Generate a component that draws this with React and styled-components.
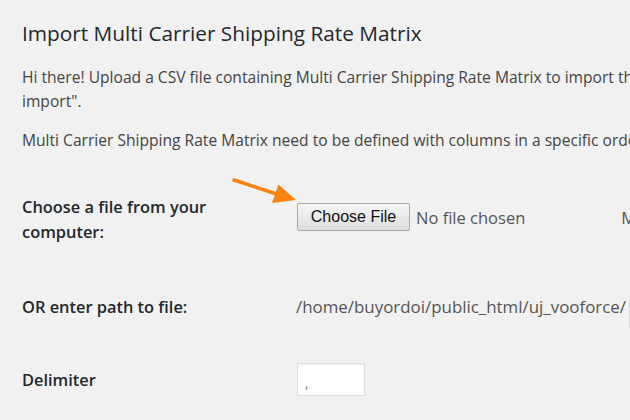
import React from "react";
import styled, { createGlobalStyle } from "styled-components";

const Global = createGlobalStyle`
  html, body { margin: 0; padding: 0; background: #f1f1f1; overflow: hidden; }
  body { font-family: "Open Sans", "Noto Sans", sans-serif; color: #444; }
`;

const Page = styled.div`
  position: relative;
  width: 630px;
  height: 420px;
  overflow: hidden;
  padding-left: 22px;
  box-sizing: border-box;
`;

const Title = styled.h1`
  margin: 19px 0 0;
  font-size: 20.8px;
  line-height: 28px;
  font-weight: 400;
  color: #23282d;
  white-space: nowrap;
`;

const Para = styled.p`
  margin: ${(p) => p.$top}px 0 0;
  font-size: 15.6px;
  line-height: 24px;
  color: #444;
  white-space: nowrap;
`;

const Table = styled.div`
  display: flex;
  flex-direction: column;
  margin-top: 42px;
`;

const Row = styled.div`
  display: grid;
  grid-template-columns: 274px auto;
  align-items: ${(p) => p.$align || "start"};
  height: ${(p) => p.$h}px;
`;

const Label = styled.div`
  font-size: 16.4px;
  line-height: 25px;
  font-weight: 600;
  color: #23282d;
`;

const Field = styled.div`
  display: flex;
  align-items: ${(p) => p.$align || "center"};
  gap: 6px;
  white-space: nowrap;
  padding-top: ${(p) => p.$pt || 0}px;
`;

const FileButton = styled.button`
  font-family: "Liberation Sans", Arial, sans-serif;
  font-size: 16px;
  color: #111;
  height: 28px;
  width: 113px;
  padding: 0 8px;
  border: 1px solid #a9a9a9;
  border-radius: 2px;
  background: linear-gradient(#f6f6f6, #dddddd);
  flex: none;
  margin-left: 1px;
`;

const Muted = styled.span`
  font-size: ${(p) => p.$fs || 16.5}px;
  line-height: 25px;
  color: #555;
  margin-left: ${(p) => p.$ml || 0}px;
`;

const PathInput = styled.input`
  width: 80px;
  height: 31px;
  border: 1px solid #ddd;
  background: #fff;
  box-sizing: border-box;
  margin-left: -3px;
  margin-top: 3px;
`;

const SmallInput = styled.input`
  width: 68px;
  height: 33px;
  box-sizing: border-box;
  border: 1px solid #ddd;
  box-shadow: inset 0 1px 2px rgba(0, 0, 0, 0.07);
  background: #fff;
  font-family: "Open Sans", sans-serif;
  font-size: 14px;
  color: #777;
  padding: 6px 7px 0;
  margin-left: 1px;
`;

const Arrow = styled.svg`
  position: absolute;
  left: 0;
  top: 0;
  pointer-events: none;
`;

export default function App() {
  return (
    <>
      <Global />
      <Page>
        <Title>Import Multi Carrier Shipping Rate Matrix</Title>
        <Para $top={18}>
          Hi there! Upload a CSV file containing Multi Carrier Shipping Rate Matrix to import the contents into your shop. Choose a .csv file to upload, then click "Upload file and
          <br />
          import".
        </Para>
        <Para $top={15}>
          Multi Carrier Shipping Rate Matrix need to be defined with columns in a specific order (8 columns).
        </Para>
        <Table>
          <Row $h={100}>
            <Label>
              Choose a file from your
              <br />
              computer:
            </Label>
            <Field $pt={9}>
              <FileButton type="button">Choose File</FileButton>
              <Muted>No file chosen</Muted>
              <Muted $ml={90}>Maximum size: 2 MB</Muted>
            </Field>
          </Row>
          <Row $h={65}>
            <Label>OR enter path to file:</Label>
            <Field $align="flex-start">
              <Muted $fs={16.9}>/home/buyordoi/public_html/uj_vooforce/</Muted>
              <PathInput type="text" />
            </Field>
          </Row>
          <Row $h={40} $align="center">
            <Label>Delimiter</Label>
            <Field>
              <SmallInput type="text" defaultValue="," />
            </Field>
          </Row>
        </Table>
        <Arrow width="630" height="420" viewBox="0 0 630 420">
          <line x1="234" y1="180" x2="278" y2="194.5" stroke="#f7820f" strokeWidth="3.5" strokeLinecap="round" />
          <polygon points="296,200 272,203 278.5,184.5" fill="#f7820f" />
        </Arrow>
      </Page>
    </>
  );
}
